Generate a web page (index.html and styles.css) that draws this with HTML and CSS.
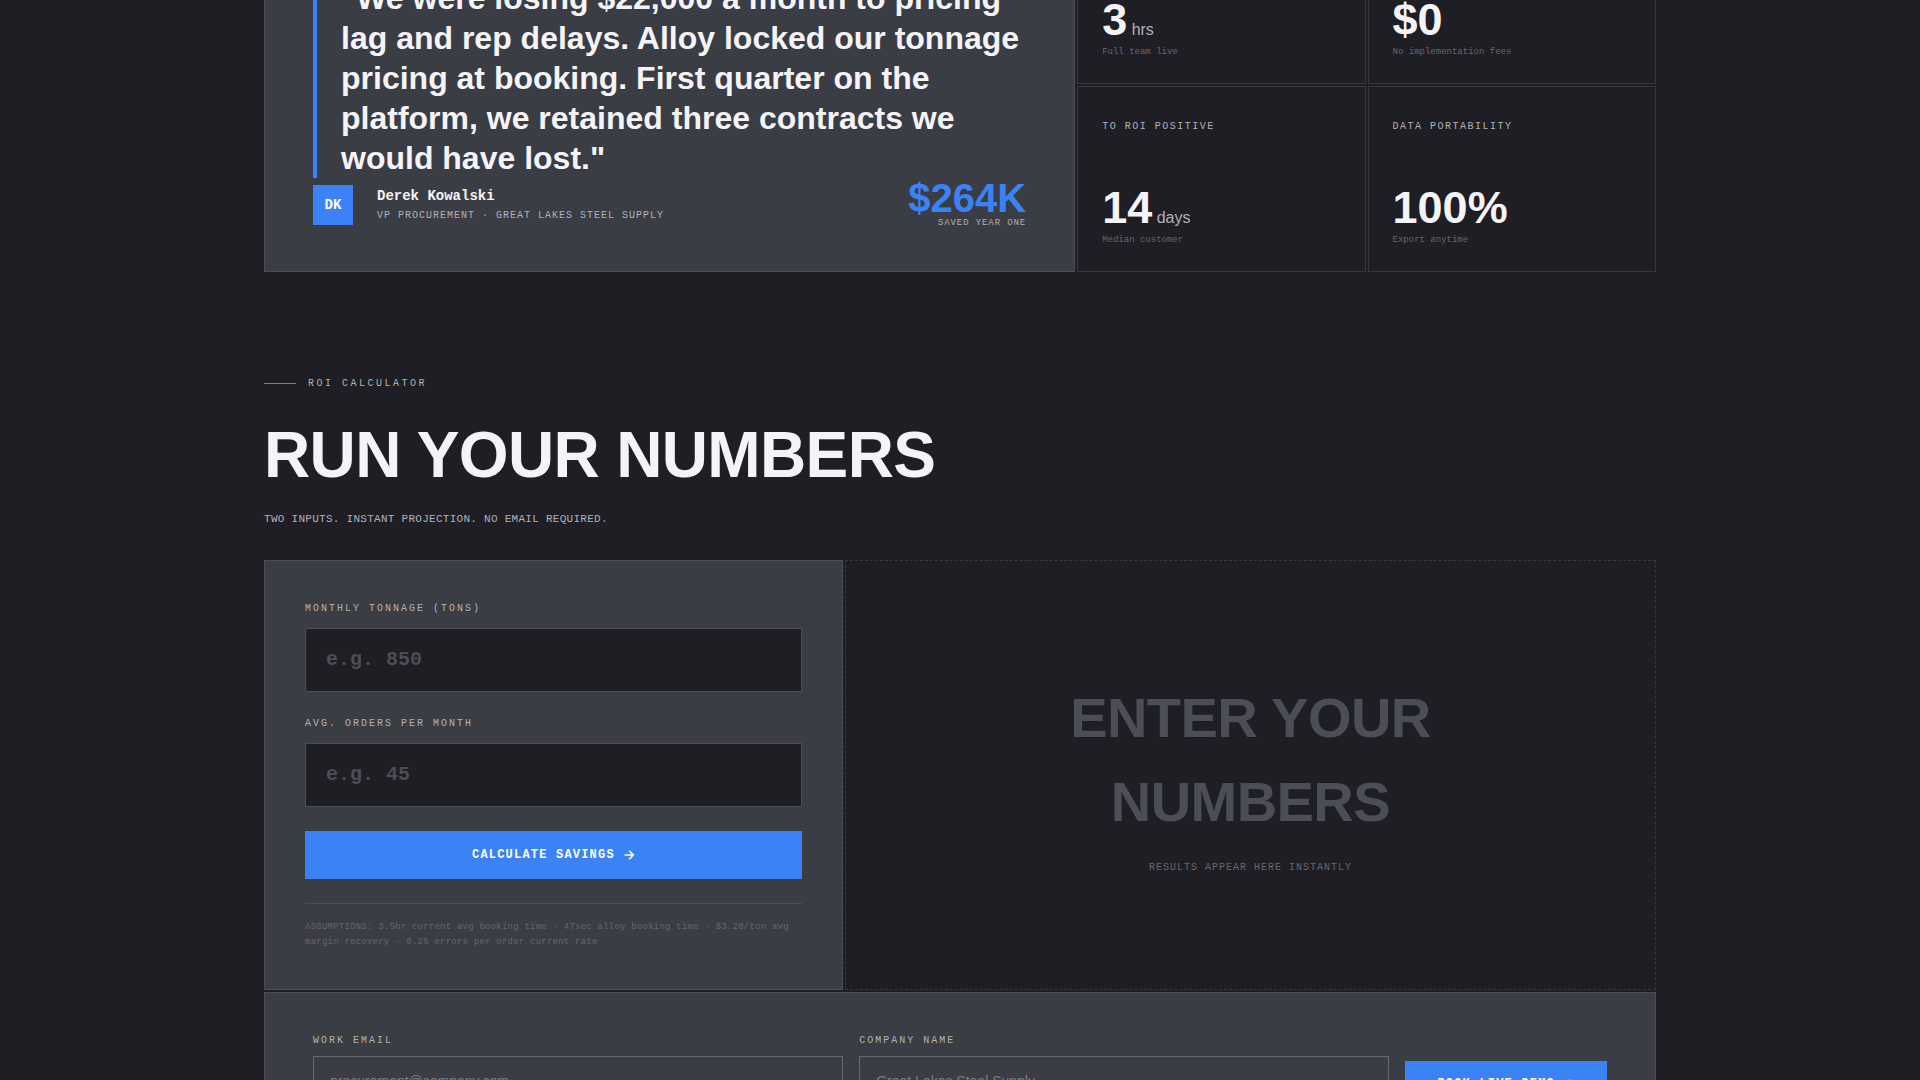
FILE: index.html
```html
<!DOCTYPE html>
<html lang="en">
<head>
<meta charset="utf-8">
<meta name="viewport" content="width=device-width, initial-scale=1">
<title>Alloy – ROI Calculator</title>
<link rel="stylesheet" href="styles.css">
</head>
<body>
<main class="page">
  <section class="proof">
    <article class="story">
      <blockquote class="quote">"We were losing $22,000 a month to pricing lag and rep delays. Alloy locked our tonnage pricing at booking. First quarter on the platform, we retained three contracts we would have lost."</blockquote>
      <footer class="byline">
        <div class="avatar">DK</div>
        <div class="person">
          <div class="person-name">Derek Kowalski</div>
          <div class="person-role">VP PROCUREMENT · GREAT LAKES STEEL SUPPLY</div>
        </div>
        <div class="saved">
          <div class="saved-value">$264K</div>
          <div class="saved-label">SAVED YEAR ONE</div>
        </div>
      </footer>
    </article>
    <div class="stats">
      <div class="stat">
        <div class="stat-body"><div class="stat-value">3<span class="unit"> hrs</span></div><div class="stat-note">Full team live</div></div>
      </div>
      <div class="stat">
        <div class="stat-body"><div class="stat-value">$0</div><div class="stat-note">No implementation fees</div></div>
      </div>
      <div class="stat">
        <div class="stat-label">TO ROI POSITIVE</div>
        <div class="stat-body"><div class="stat-value">14<span class="unit"> days</span></div><div class="stat-note">Median customer</div></div>
      </div>
      <div class="stat">
        <div class="stat-label">DATA PORTABILITY</div>
        <div class="stat-body"><div class="stat-value">100%</div><div class="stat-note">Export anytime</div></div>
      </div>
    </div>
  </section>

  <section class="roi">
    <header class="roi-head">
      <p class="eyebrow">ROI CALCULATOR</p>
      <h2 class="title">RUN YOUR NUMBERS</h2>
      <p class="subtitle">TWO INPUTS. INSTANT PROJECTION. NO EMAIL REQUIRED.</p>
    </header>
    <div class="calc">
      <form class="calc-form">
        <div class="field">
          <label class="label" for="tonnage">MONTHLY TONNAGE (TONS)</label>
          <input class="number-input" id="tonnage" type="text" inputmode="numeric" placeholder="e.g. 850">
        </div>
        <div class="field">
          <label class="label" for="orders">AVG. ORDERS PER MONTH</label>
          <input class="number-input" id="orders" type="text" inputmode="numeric" placeholder="e.g. 45">
        </div>
        <button class="button" type="button">CALCULATE SAVINGS
          <svg class="arrow" viewBox="0 0 12 12" aria-hidden="true"><path d="M1.5 6h9M6.2 1.8L10.4 6l-4.2 4.2"/></svg>
        </button>
        <p class="assumptions">ASSUMPTIONS: 3.5hr current avg booking time · 47sec alloy booking time · $3.20/ton avg margin recovery · 0.25 errors per order current rate</p>
      </form>
      <div class="results">
        <p class="results-title">ENTER YOUR<br>NUMBERS</p>
        <p class="results-note">RESULTS APPEAR HERE INSTANTLY</p>
      </div>
    </div>
    <form class="demo">
      <div class="demo-field">
        <label class="label" for="email">WORK EMAIL</label>
        <input class="text-input" id="email" type="email" placeholder="procurement@company.com">
      </div>
      <div class="demo-field">
        <label class="label" for="company">COMPANY NAME</label>
        <input class="text-input" id="company" type="text" placeholder="Great Lakes Steel Supply">
      </div>
      <button class="button" type="button">BOOK LIVE DEMO
        <svg class="arrow" viewBox="0 0 12 12" aria-hidden="true"><path d="M1.5 6h9M6.2 1.8L10.4 6l-4.2 4.2"/></svg>
      </button>
    </form>
  </section>
</main>
</body>
</html>
```
FILE: styles.css
```css
:root {
  --bg: #1f1e24;
  --panel: #3b3d45;
  --line: #4b4d57;
  --line-dim: #37373d;
  --accent: #3b82f6;
  --text: #f4f4f8;
  --muted: #b0b1b7;
  --faint: #66666e;
  --sans: "Liberation Sans", Arial, sans-serif;
  --mono: "Liberation Mono", "Courier New", monospace;
}

* { box-sizing: border-box; }

html { background: var(--bg); }

body {
  margin: 0;
  overflow-x: hidden;
  background: var(--bg);
  color: var(--text);
  font-family: var(--sans);
}

p, h2, blockquote { margin: 0; }

.page {
  max-width: 1440px;
  margin: -102px auto 0;
  padding: 0 24px 96px;
}

/* Customer story and stats */
.proof {
  display: grid;
  grid-template-columns: repeat(12, minmax(0, 1fr));
  gap: 2px;
}

.story {
  grid-column: span 7;
  display: flex;
  flex-direction: column;
  justify-content: flex-end;
  padding: 0 48px 41px;
  background: var(--panel);
  border: 1px solid var(--line);
}

.quote {
  padding-left: 24px;
  border-left: 4px solid var(--accent);
  font-size: 32px;
  font-weight: 700;
  line-height: 40px;
}

.byline {
  display: flex;
  align-items: center;
  gap: 24px;
  margin-top: 2px;
  font-family: var(--mono);
}

.avatar {
  display: grid;
  place-items: center;
  width: 40px;
  height: 40px;
  background: var(--accent);
  color: #fff;
  font-size: 14px;
  font-weight: 700;
}

.person-name {
  font-size: 14px;
  font-weight: 700;
  line-height: 22px;
}

.person-role {
  color: var(--muted);
  font-size: 10px;
  letter-spacing: 1px;
  line-height: 18px;
}

.saved {
  margin-left: auto;
  text-align: right;
}

.saved-value {
  color: var(--accent);
  font-family: var(--sans);
  font-size: 40px;
  font-weight: 700;
  line-height: 36px;
}

.saved-label {
  padding-top: 1px;
  color: var(--muted);
  font-size: 9px;
  letter-spacing: 0.1em;
  line-height: 13px;
}

.stats {
  grid-column: span 5;
  display: grid;
  grid-template-columns: 1fr 1fr;
  gap: 2px;
}

.stat {
  display: flex;
  flex-direction: column;
  min-height: 186px;
  padding: 32px 24px 22px;
  border: 1px solid var(--line-dim);
}

.stat-label {
  color: var(--muted);
  font-family: var(--mono);
  font-size: 10px;
  letter-spacing: 0.15em;
  line-height: 15px;
}

.stat-body { margin-top: auto; }

.stat-value {
  font-size: 45px;
  font-weight: 700;
  line-height: 47px;
}

.unit {
  color: var(--muted);
  font-size: 16px;
  font-weight: 400;
  line-height: 16px;
}

.stat-note {
  color: var(--faint);
  font-family: var(--mono);
  font-size: 9px;
  line-height: 18px;
}

/* Calculator */
.roi-head { padding: 103px 0 33px; }

.eyebrow {
  display: flex;
  align-items: center;
  gap: 12px;
  color: var(--muted);
  font-family: var(--mono);
  font-size: 10px;
  letter-spacing: 0.25em;
  line-height: 17px;
}

.eyebrow::before {
  content: "";
  width: 32px;
  height: 1px;
  background: var(--accent);
}

.title {
  margin-top: 31px;
  font-size: 64px;
  letter-spacing: -0.01em;
  line-height: 64px;
}

.subtitle {
  margin-top: 24px;
  color: var(--muted);
  font-family: var(--mono);
  font-size: 11px;
  letter-spacing: 0.025em;
  line-height: 16px;
}

.calc {
  display: grid;
  grid-template-columns: repeat(12, minmax(0, 1fr));
  gap: 2px;
}

.calc-form {
  grid-column: span 5;
  padding: 40px 40px 39px;
  background: var(--panel);
  border: 1px solid var(--line);
}

.field { margin-bottom: 24px; }

.label {
  display: block;
  color: var(--muted);
  font-family: var(--mono);
  font-size: 10px;
  letter-spacing: 2px;
  line-height: 15px;
}

.number-input {
  display: block;
  width: 100%;
  height: 64px;
  margin-top: 12px;
  padding: 0 20px 2px;
  background: var(--bg);
  border: 1px solid var(--line);
  border-radius: 0;
  color: var(--text);
  font: 700 20px var(--mono);
}

.number-input::placeholder { color: var(--line); }

.button {
  display: flex;
  align-items: center;
  justify-content: center;
  gap: 8px;
  height: 44px;
  padding: 2px 32px 0;
  background: var(--accent);
  border: 0;
  color: #fff;
  font: 700 12px var(--mono);
  letter-spacing: 0.1em;
  white-space: nowrap;
}

.calc-form .button {
  width: 100%;
  height: 48px;
  padding: 0 32px;
}

.arrow {
  width: 12px;
  height: 12px;
  fill: none;
  stroke: currentColor;
  stroke-width: 1.5;
}

.assumptions {
  margin-top: 24px;
  padding-top: 16px;
  border-top: 1px solid var(--line);
  color: var(--faint);
  font-family: var(--mono);
  font-size: 9px;
  letter-spacing: 0.025em;
  line-height: 15px;
}

.results {
  grid-column: span 7;
  display: flex;
  flex-direction: column;
  align-items: center;
  justify-content: center;
  border: 1px dashed var(--line-dim);
  text-align: center;
}

.results-title {
  color: var(--line);
  font-size: 56px;
  font-weight: 700;
  letter-spacing: -0.01em;
  line-height: 84px;
}

.results-note {
  margin-top: 16px;
  color: var(--faint);
  font-family: var(--mono);
  font-size: 10px;
  letter-spacing: 1px;
  line-height: 15px;
}

/* Demo request */
.demo {
  display: flex;
  align-items: flex-end;
  gap: 16px;
  margin-top: 2px;
  padding: 40px 48px;
  background: var(--panel);
  border: 1px solid var(--line);
}

.demo-field { flex: 1; }

.text-input {
  display: block;
  width: 100%;
  height: 49px;
  margin-top: 8px;
  padding: 0 16px;
  background: transparent;
  border: 1px solid #666872;
  border-radius: 0;
  color: var(--text);
  font: 14px var(--sans);
}

.text-input::placeholder { color: #7c7c82; }
```
